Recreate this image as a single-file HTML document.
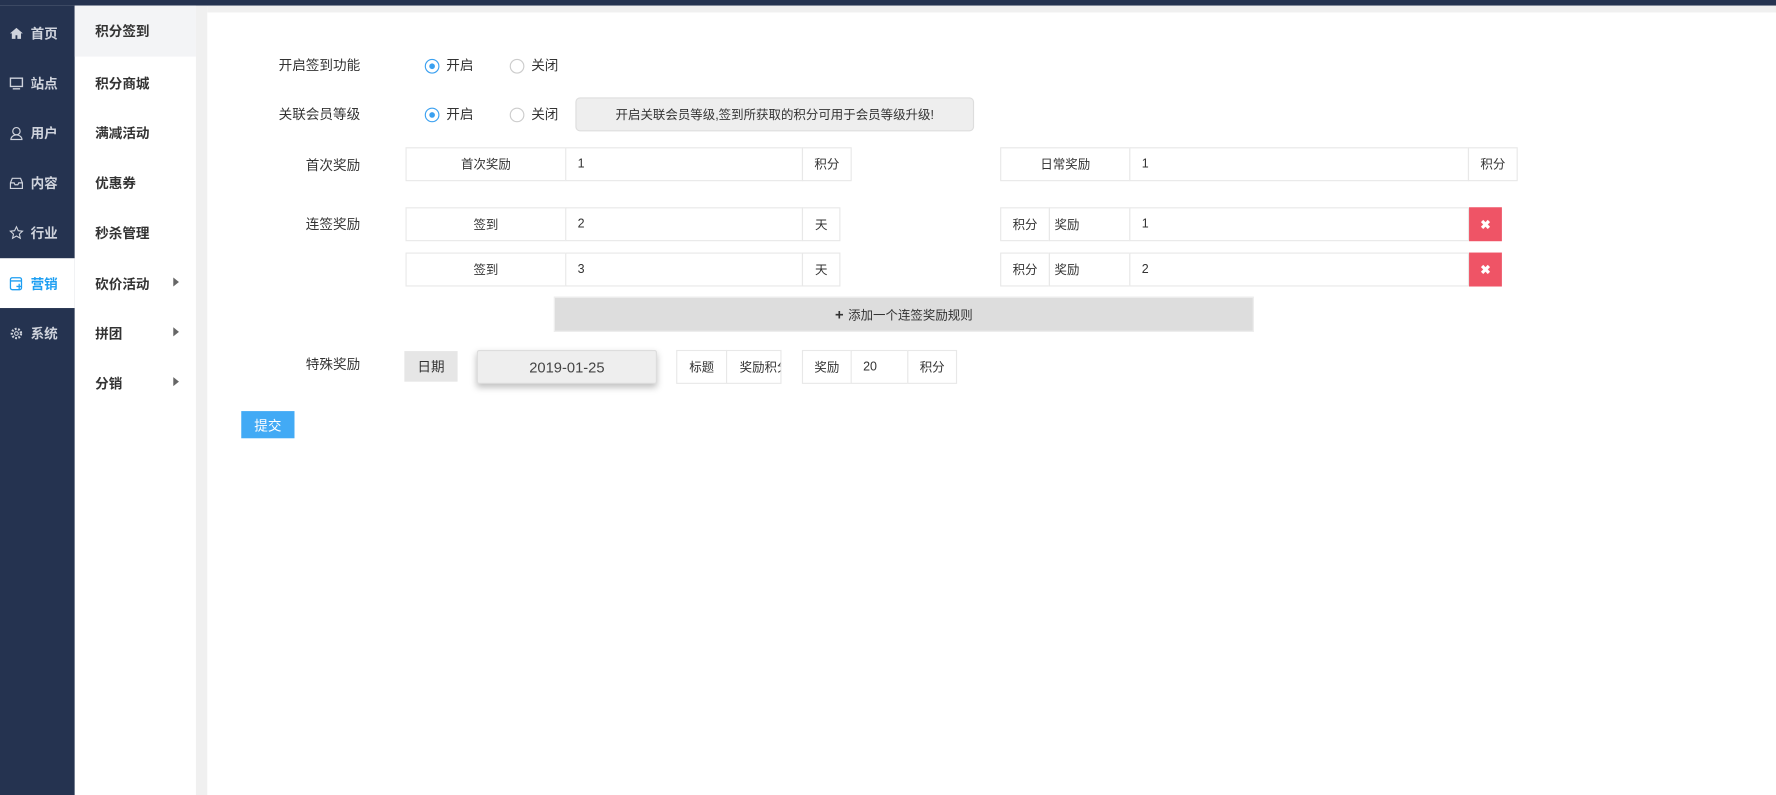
<!DOCTYPE html>
<html><head><meta charset="utf-8">
<style>
*{margin:0;padding:0;box-sizing:border-box}
html,body{width:1776px;height:795px;overflow:hidden;background:#fff}
body{font-family:"Liberation Sans","Noto Sans CJK SC",sans-serif;color:#333}
#w{position:absolute;left:0;top:0;width:1568px;height:702px;transform:scale(1.13265,1.1325);transform-origin:0 0}
.a{position:absolute}
.top{left:0;top:0;width:1568px;height:5px;background:#253350}
.sb{left:0;top:5px;width:66px;height:697px;background:#253350}
.si{position:absolute;left:0;width:66px;height:44px;color:#cfd3dc;font-size:12px;font-weight:bold;display:flex;align-items:center;padding-left:8px}
.si svg{width:13px;height:13px;margin-right:6px}
.si.act{background:#fff;color:#1e9ff2}
.sb2{left:66px;top:5px;width:107px;height:697px;background:#fff}
.s2{position:absolute;left:0;width:107px;height:44px;font-size:12px;font-weight:bold;color:#333;display:flex;align-items:center;padding-left:18px}
.s2 .ar{position:absolute;left:87px;top:17px;width:0;height:0;border-left:5px solid #666;border-top:4.5px solid transparent;border-bottom:4.5px solid transparent}
.gut{left:173px;top:5px;width:10px;height:697px;background:#f0f0f0}
.gtop{left:183px;top:5px;width:1385px;height:6px;background:#f0f0f0}
.lb{font-size:12px;color:#333;text-align:right;width:120px;left:198px;line-height:14px}
.rad{width:13px;height:13px;border-radius:50%;border:1px solid #ccc;background:#fff}
.rad.on{border:1.5px solid #3aa0f0}
.rad.on::after{content:"";position:absolute;left:2.5px;top:2.5px;width:5px;height:5px;border-radius:50%;background:#3aa0f0}
.rt{font-size:12px;color:#333;line-height:14px}
.bx{border:1px solid #e8e8e8;background:#fff;font-size:11px;color:#333;display:flex;align-items:center;justify-content:center}
.bx.l{justify-content:flex-start;padding-left:10px}
.del{background:#ef5466;color:#fff;font-size:11px;font-weight:bold;display:flex;align-items:center;justify-content:center}
</style></head><body><div id="w">
<div class="a top"></div>
<div class="a sb">
 <div class="si" style="top:2px"><svg viewBox="0 0 16 16"><path d="M8 2L1 8h2v6h4v-4h2v4h4V8h2z" fill="#cfd3dc"/></svg>首页</div>
 <div class="si" style="top:46px"><svg viewBox="0 0 16 16"><rect x="1.5" y="2.5" width="13" height="9" fill="none" stroke="#cfd3dc" stroke-width="1.5"/><path d="M4 14h8" stroke="#cfd3dc" stroke-width="1.5"/></svg>站点</div>
 <div class="si" style="top:90px"><svg viewBox="0 0 16 16"><circle cx="8" cy="6" r="4" fill="none" stroke="#cfd3dc" stroke-width="1.3"/><path d="M2 15c0-3 3-5 6-5s6 2 6 5z" fill="none" stroke="#cfd3dc" stroke-width="1.3"/></svg>用户</div>
 <div class="si" style="top:134px"><svg viewBox="0 0 16 16"><path d="M1.5 8l2-5h9l2 5v6h-13zM1.5 8h4l1 2h3l1-2h4" fill="none" stroke="#cfd3dc" stroke-width="1.3"/></svg>内容</div>
 <div class="si" style="top:178px"><svg viewBox="0 0 16 16"><path d="M8 1.5l2 4.3 4.6.5-3.4 3.1 1 4.6L8 11.6 3.8 14l1-4.6L1.4 6.3 6 5.8z" fill="none" stroke="#cfd3dc" stroke-width="1.2"/></svg>行业</div>
 <div class="si act" style="top:223px"><svg viewBox="0 0 16 16"><rect x="1.5" y="1.5" width="12" height="13" rx="2" fill="none" stroke="#1e9ff2" stroke-width="1.4"/><path d="M1.5 5h12M8 11h6M11 8v6" stroke="#1e9ff2" stroke-width="1.4"/></svg>营销</div>
 <div class="si" style="top:267px"><svg viewBox="0 0 16 16"><circle cx="8" cy="8" r="5" fill="none" stroke="#cfd3dc" stroke-width="2.5" stroke-dasharray="2 1.6"/><circle cx="8" cy="8" r="2" fill="none" stroke="#cfd3dc" stroke-width="1.2"/></svg>系统</div>
</div>
<div class="a sb2">
 <div class="s2" style="top:0;height:45px;background:#f3f4f6">积分签到</div>
 <div class="s2" style="top:46px">积分商城</div>
 <div class="s2" style="top:90px">满减活动</div>
 <div class="s2" style="top:134px">优惠券</div>
 <div class="s2" style="top:178px">秒杀管理</div>
 <div class="s2" style="top:223px">砍价活动<i class="ar"></i></div>
 <div class="s2" style="top:267px">拼团<i class="ar"></i></div>
 <div class="s2" style="top:311px">分销<i class="ar"></i></div>
</div>
<div class="a gut"></div>
<div class="a gtop"></div>

<div class="a lb" style="top:51px">开启签到功能</div>
<div class="a rad on" style="left:375px;top:52px"></div><div class="a rt" style="left:394px;top:51px">开启</div>
<div class="a rad" style="left:450px;top:52px"></div><div class="a rt" style="left:469px;top:51px">关闭</div>

<div class="a lb" style="top:94px">关联会员等级</div>
<div class="a rad on" style="left:375px;top:95px"></div><div class="a rt" style="left:394px;top:94px">开启</div>
<div class="a rad" style="left:450px;top:95px"></div><div class="a rt" style="left:469px;top:94px">关闭</div>
<div class="a bx" style="left:508px;top:86px;width:352px;height:30px;background:#eee;border-color:#ddd;border-radius:4px">开启关联会员等级,签到所获取的积分可用于会员等级升级!</div>

<div class="a lb" style="top:139px">首次奖励</div>
<div class="a bx" style="left:358px;top:130px;width:142px;height:30px">首次奖励</div>
<div class="a bx l" style="left:499px;top:130px;width:210px;height:30px">1</div>
<div class="a bx" style="left:708px;top:130px;width:44px;height:30px">积分</div>
<div class="a bx" style="left:883px;top:130px;width:115px;height:30px">日常奖励</div>
<div class="a bx l" style="left:997px;top:130px;width:300px;height:30px">1</div>
<div class="a bx" style="left:1296px;top:130px;width:44px;height:30px">积分</div>

<div class="a lb" style="top:191px">连签奖励</div>
<div class="a bx" style="left:358px;top:183px;width:142px;height:30px">签到</div>
<div class="a bx l" style="left:499px;top:183px;width:210px;height:30px">2</div>
<div class="a bx" style="left:708px;top:183px;width:34px;height:30px">天</div>
<div class="a bx" style="left:883px;top:183px;width:44px;height:30px">积分</div>
<div class="a bx l" style="left:926px;top:183px;width:72px;height:30px;padding-left:4px">奖励</div>
<div class="a bx l" style="left:997px;top:183px;width:300px;height:30px">1</div>
<div class="a del" style="left:1297px;top:183px;width:29px;height:30px">✖</div>

<div class="a bx" style="left:358px;top:223px;width:142px;height:30px">签到</div>
<div class="a bx l" style="left:499px;top:223px;width:210px;height:30px">3</div>
<div class="a bx" style="left:708px;top:223px;width:34px;height:30px">天</div>
<div class="a bx" style="left:883px;top:223px;width:44px;height:30px">积分</div>
<div class="a bx l" style="left:926px;top:223px;width:72px;height:30px;padding-left:4px">奖励</div>
<div class="a bx l" style="left:997px;top:223px;width:300px;height:30px">2</div>
<div class="a del" style="left:1297px;top:223px;width:29px;height:30px">✖</div>

<div class="a bx" style="left:489px;top:262px;width:618px;height:31px;background:#ddd;border-color:#eee"><b style="font-size:13px;margin-right:4px">+</b>添加一个连签奖励规则</div>

<div class="a lb" style="top:315px">特殊奖励</div>
<div class="a bx" style="left:357px;top:310px;width:47px;height:27px;background:#e6e6e6;border:none;font-size:12px">日期</div>
<div class="a bx" style="left:421px;top:309px;width:159px;height:30px;background:#eee;border-color:#ddd;border-radius:2px;box-shadow:0 3px 6px rgba(0,0,0,.25);font-size:13px;color:#444">2019-01-25</div>
<div class="a bx" style="left:597px;top:309px;width:45px;height:30px">标题</div>
<div class="a bx" style="left:641px;top:309px;width:49px;height:30px;overflow:hidden;justify-content:flex-start;padding-left:11px;white-space:nowrap">奖励积分</div>
<div class="a bx" style="left:708px;top:309px;width:44px;height:30px">奖励</div>
<div class="a bx l" style="left:751px;top:309px;width:51px;height:30px">20</div>
<div class="a bx" style="left:801px;top:309px;width:44px;height:30px">积分</div>

<div class="a" style="left:213px;top:363px;width:47px;height:24px;background:#42aaf5;color:#fff;font-size:12px;display:flex;align-items:center;justify-content:center">提交</div>
</div></body></html>
